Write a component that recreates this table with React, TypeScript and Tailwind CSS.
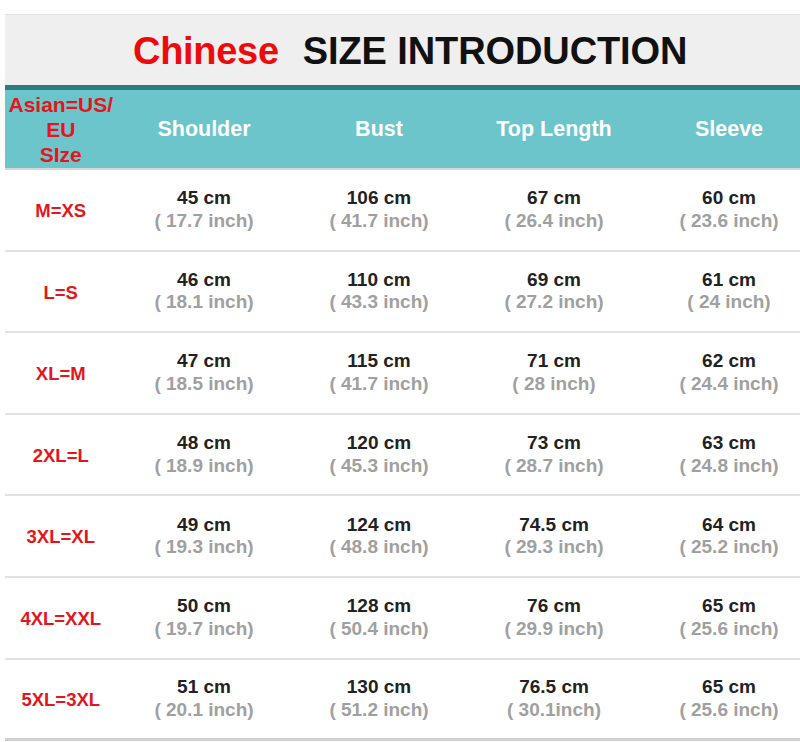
import React from "react";

type Row = {
  size: string;
  cells: [string, string][];
};

const rows: Row[] = [
  { size: "M=XS", cells: [["45 cm", "( 17.7 inch)"], ["106 cm", "( 41.7 inch)"], ["67 cm", "( 26.4 inch)"], ["60 cm", "( 23.6 inch)"]] },
  { size: "L=S", cells: [["46 cm", "( 18.1 inch)"], ["110 cm", "( 43.3 inch)"], ["69 cm", "( 27.2 inch)"], ["61 cm", "( 24 inch)"]] },
  { size: "XL=M", cells: [["47 cm", "( 18.5 inch)"], ["115 cm", "( 41.7 inch)"], ["71 cm", "( 28 inch)"], ["62 cm", "( 24.4 inch)"]] },
  { size: "2XL=L", cells: [["48 cm", "( 18.9 inch)"], ["120 cm", "( 45.3 inch)"], ["73 cm", "( 28.7 inch)"], ["63 cm", "( 24.8 inch)"]] },
  { size: "3XL=XL", cells: [["49 cm", "( 19.3 inch)"], ["124 cm", "( 48.8 inch)"], ["74.5 cm", "( 29.3 inch)"], ["64 cm", "( 25.2 inch)"]] },
  { size: "4XL=XXL", cells: [["50 cm", "( 19.7 inch)"], ["128 cm", "( 50.4 inch)"], ["76 cm", "( 29.9 inch)"], ["65 cm", "( 25.6 inch)"]] },
  { size: "5XL=3XL", cells: [["51 cm", "( 20.1 inch)"], ["130 cm", "( 51.2 inch)"], ["76.5 cm", "( 30.1inch)"], ["65 cm", "( 25.6 inch)"]] },
];

const headers = ["Shoulder", "Bust", "Top Length", "Sleeve"];

const App: React.FC = () => {
  return (
    <div className="w-[800px] h-[742px] overflow-hidden bg-white font-['Liberation_Sans',Arial,sans-serif] font-bold">
      <div className="pt-[14px] pl-[5px] w-[816px]">
        {/* Title */}
        <div className="h-[71px] bg-[#efefef] border-t border-[#e4e4e4] flex items-center pl-[128px] pt-[1px] text-[38px] leading-none">
          <span className="text-[#ec0a0d] tracking-[-0.3px]">Chinese</span>
          <span className="text-[#111] ml-[24px] tracking-[-0.1px]">SIZE INTRODUCTION</span>
        </div>

        {/* Header */}
        <div className="h-[5px] bg-[#2a7c80]" />
        <div className="h-[78px] bg-[#6cc5ca] grid grid-cols-[111.5px_175px_175px_175px_175px] items-center border-b-2 border-[#d6d6d6] box-content">
          <div className="text-[#e3161d] text-[21px] leading-[25px] text-center pt-[1px]">
            Asian=US/
            <br />
            EU
            <br />
            SIze
          </div>
          {headers.map((h) => (
            <div key={h} className="text-white text-[21.5px] text-center pt-[1px]">
              {h}
            </div>
          ))}
        </div>

        {/* Rows */}
        {rows.map((row, i) => (
          <div
            key={row.size}
            className={`h-[81.6px] grid grid-cols-[111.5px_175px_175px_175px_175px] items-center ${
              i === rows.length - 1 ? "border-b-[3px] border-[#cfcfcf]" : "border-b-2 border-[#e2e2e2]"
            }`}
          >
            <div className="text-[#e3161d] text-[18.5px] text-center pt-[2px]">{row.size}</div>
            {row.cells.map(([cm, inch], j) => (
              <div key={j} className="text-center text-[19px] leading-[22.5px]">
                <div className="text-[#222]">{cm}</div>
                <div className="text-[#a0a0a0]">{inch}</div>
              </div>
            ))}
          </div>
        ))}
      </div>
    </div>
  );
};

export default App;
